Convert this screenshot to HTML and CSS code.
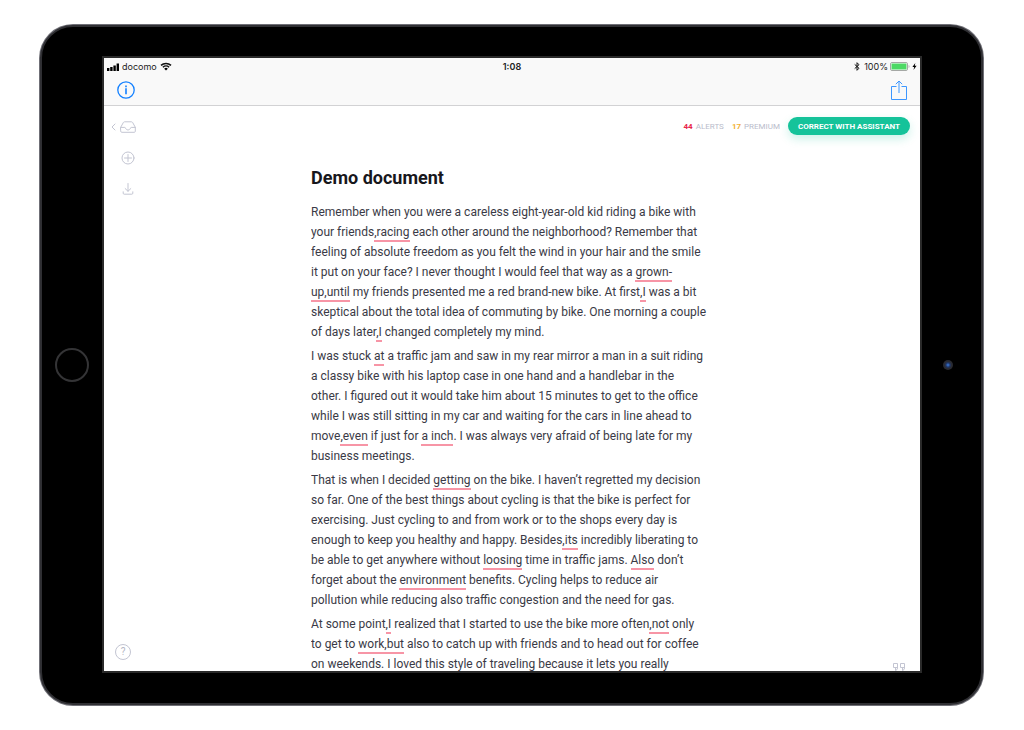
FILE: index.html
```
<!DOCTYPE html>
<html lang="en">
<head>
<meta charset="utf-8">
<meta name="viewport" content="width=device-width, initial-scale=1">
<title>Demo document</title>
<link rel="stylesheet" href="styles.css">
</head>
<body>
<div class="device">
  <div class="bezel">
    <div class="bezel-side"><span class="home-button"></span></div>
    <div class="screen">
      <header class="topbar">
        <div class="status">
          <div class="status-group">
            <svg class="signal" viewBox="0 0 12 8" aria-hidden="true"><path d="M0 5h2.400v3H0zM3.200 4h2.400v4H3.200zM6.400 2.500h2.400V8H6.400zM9.600 0.500H12V8H9.600z"/></svg>
            <span>docomo</span>
            <svg class="wifi" viewBox="0 0 12 9" aria-hidden="true"><path d="M1 3.400a7.200 7.200 0 0 1 10 0M2.900 5.300a4.500 4.500 0 0 1 6.200 0" fill="none" stroke="#111" stroke-width="1.500"/><path d="M6 8.600 4.200 6.700a2.600 2.600 0 0 1 3.600 0z"/></svg>
          </div>
          <time class="clock">1:08</time>
          <div class="status-group status-end">
            <svg class="bluetooth" viewBox="0 0 6 9" aria-hidden="true"><path d="M.7 2.400 5 6.300 3 8.300V.7l2 2L.7 6.600" fill="none" stroke="#111"/></svg>
            <span>100%</span>
            <svg class="battery" viewBox="0 0 20 9" aria-hidden="true"><rect x=".5" y=".5" width="17" height="8" rx="1.500" fill="#fff" stroke="#a5a8a5"/><rect x="1.500" y="1.500" width="15" height="6" rx=".5" fill="#4cd964"/><path d="M18.600 3v3c1.200-.4 1.200-2.600 0-3z" fill="#a5a8a5"/></svg>
            <svg class="bolt" viewBox="0 0 5 7" aria-hidden="true"><path d="M3.300 0 .4 4h1.800l-.7 3 3.100-4.200H2.800z"/></svg>
          </div>
        </div>
        <div class="toolbar">
          <button class="icon-button" type="button" aria-label="Information">
            <svg class="info" viewBox="0 0 18 18" aria-hidden="true"><circle cx="9" cy="9" r="8.200" fill="none" stroke="#1380ff" stroke-width="1.300"/><path d="M8.200 4.600h1.600v1.600H8.200zM8.200 7.300h1.600v5.900H8.200z" fill="#1380ff"/></svg>
          </button>
          <button class="icon-button" type="button" aria-label="Share">
            <svg class="share" viewBox="0 0 16 21" aria-hidden="true"><path d="M5.500 6.500h-5v13h15v-13h-5M8 13V1.500M4.800 4.200 8 1l3.200 3.200" fill="none" stroke="#3d97ff"/></svg>
          </button>
        </div>
      </header>
      <main class="editor">
        <nav class="rail" aria-label="Document tools">
          <button class="icon-button back" type="button" aria-label="Back to documents">
            <svg class="chevron" viewBox="0 0 5 8" aria-hidden="true"><path d="M4 1 1 4l3 3" class="line"/></svg>
            <svg class="tray" viewBox="0 0 16 12" aria-hidden="true"><path d="M.7 6.300 3.300 1.600Q3.700.8 4.600.8h6.800q.9 0 1.300.8l2.600 4.700v4q0 1-1 1H1.700q-1 0-1-1zM.7 6.400h4q.5 0 .7.5c.9 2.700 4.300 2.700 5.200 0q.2-.5.7-.5h4" class="line"/></svg>
          </button>
          <button class="icon-button" type="button" aria-label="New document">
            <svg class="tool" viewBox="0 0 14 14" aria-hidden="true"><circle cx="7" cy="7" r="6" class="line"/><path d="M7 3.500v7M3.500 7h7" class="line"/></svg>
          </button>
          <button class="icon-button" type="button" aria-label="Download">
            <svg class="tool" viewBox="0 0 14 14" aria-hidden="true"><path d="M7 1.500v7.700M4.200 6.600 7 9.300l2.800-2.700M2.200 9.800v1.400q0 1 1 1h7.600q1 0 1-1V9.800" class="line"/></svg>
          </button>
          <button class="help" type="button" aria-label="Help">?</button>
        </nav>
        <div class="actions">
          <span class="count"><b class="alerts">44</b> ALERTS</span>
          <span class="count"><b class="premium">17</b> PREMIUM</span>
          <button class="assistant" type="button">CORRECT WITH ASSISTANT</button>
        </div>
        <article class="document">
          <h1>Demo document</h1>
          <p>Remember when you were a careless eight-year-old kid riding a bike with<br>
          your friends<mark>,racing</mark> each other around the neighborhood? Remember that<br>
          feeling of absolute freedom as you felt the wind in your hair and the smile<br>
          it put on your face? I never thought I would feel that way as a <mark>grown-<br>
          up,until</mark> my friends presented me a red brand-new bike. At first<mark>,I</mark> was a bit<br>
          skeptical about the total idea of commuting by bike. One morning a couple<br>
          of days later<mark>,I</mark> changed completely my mind.</p>
          <p>I was stuck <mark>at</mark> a traffic jam and saw in my rear mirror a man in a suit riding<br>
          a classy bike with his laptop case in one hand and a handlebar in the<br>
          other. I figured out it would take him about 15 minutes to get to the office<br>
          while I was still sitting in my car and waiting for the cars in line ahead to<br>
          move<mark>,even</mark> if just for <mark>a inch</mark>. I was always very afraid of being late for my<br>
          business meetings.</p>
          <p>That is when I decided <mark>getting</mark> on the bike. I haven’t regretted my decision<br>
          so far. One of the best things about cycling is that the bike is perfect for<br>
          exercising. Just cycling to and from work or to the shops every day is<br>
          enough to keep you healthy and happy. Besides<mark>,its</mark> incredibly liberating to<br>
          be able to get anywhere without <mark>loosing</mark> time in traffic jams. <mark>Also</mark> don’t<br>
          forget about the <mark>environment</mark> benefits. Cycling helps to reduce air<br>
          pollution while reducing also traffic congestion and the need for gas.</p>
          <p>At some point<mark>,I</mark> realized that I started to use the bike more often<mark>,not</mark> only<br>
          to get to <mark>work,but</mark> also to catch up with friends and to head out for coffee<br>
          on weekends. I loved this style of traveling because it lets you really</p>
        </article>
        <svg class="quotes" viewBox="0 0 12 8" aria-hidden="true"><path d="M4.500 4.500h-4v-4h4v4.500q0 2-2 2.500V4.500M11.500 4.500h-4v-4h4v4.500q0 2-2 2.500V4.500" class="line"/></svg>
      </main>
    </div>
    <div class="bezel-side"><span class="camera"></span></div>
  </div>
</div>
</body>
</html>
```
FILE: styles.css
```
* { box-sizing: border-box; }

body {
  margin: 0;
  padding: 24px 40px 24px 39px;
  background: #fff;
  font-family: Roboto, "Liberation Sans", sans-serif;
  color: #3a3a46;
}

svg { display: block; flex: none; }

button {
  margin: 0;
  border: 0;
  font-family: inherit;
  cursor: pointer;
}

.device {
  height: calc(100vh - 48px);
  padding: 1px;
  border-radius: 34px;
  background: #6f6f76;
}

.bezel {
  display: grid;
  grid-template-columns: 60px minmax(0, 1fr) 59px;
  height: 100%;
  padding: 29px 0 30px;
  border: 2px solid #2f2f33;
  border-radius: 33px;
  background: #000;
}

.bezel-side {
  display: flex;
  align-items: center;
  justify-content: center;
}

.home-button {
  width: 34px;
  height: 34px;
  border: 2px solid #343436;
  border-radius: 50%;
}

.camera {
  width: 10px;
  height: 10px;
  margin-right: 8px;
  border-radius: 50%;
  background: radial-gradient(circle, #3f7fe0 0, #1f3566 30%, #292b33 50%, #24252a);
}

.screen {
  display: flex;
  flex-direction: column;
  min-height: 0;
  overflow: hidden;
  border: 2px solid #2a2a2a;
  background: #fff;
}

.topbar {
  flex: none;
  border-bottom: 1px solid #d2d2d4;
  background: #f9f9f9;
}

.status {
  display: grid;
  grid-template-columns: 1fr auto 1fr;
  align-items: center;
  height: 17px;
  padding: 0 3px;
  font-size: 9px;
  font-family: Inter, sans-serif;
  color: #222;
}

.status-group {
  display: flex;
  align-items: center;
  gap: 3px;
}

.status-end {
  justify-content: flex-end;
  gap: 2px;
}

.clock { font-weight: 600; }
.signal { width: 12px; height: 8px; }
.wifi { width: 12px; height: 9px; }
.bluetooth { width: 6px; height: 9px; margin-right: 2px; }
.battery { width: 20px; height: 9px; }
.bolt { width: 5px; height: 7px; }

.toolbar {
  display: flex;
  align-items: center;
  justify-content: space-between;
  height: 30px;
  padding: 0 13px;
}

.icon-button {
  display: flex;
  align-items: center;
  padding: 0;
  background: none;
}

.info { width: 18px; height: 18px; }
.share { width: 16px; height: 21px; }

.editor {
  flex: 1;
  display: grid;
  grid-template-columns: minmax(0, 1fr) 402px minmax(0, 1fr);
  grid-template-rows: auto minmax(0, 1fr);
  min-height: 0;
}

.line {
  fill: none;
  stroke: #c3c5d2;
  stroke-linecap: round;
  stroke-linejoin: round;
}

.rail {
  grid-row: 1 / 3;
  display: flex;
  flex-direction: column;
  align-items: flex-start;
  gap: 17px;
  padding: 14px 0 11px 17px;
}

.back {
  gap: 4px;
  height: 14px;
  margin-left: -10px;
}

.chevron { width: 5px; height: 8px; }
.tray { width: 16px; height: 12px; }
.tool { width: 14px; height: 14px; }

.help {
  width: 16px;
  height: 16px;
  margin: auto 0 0 -6px;
  padding: 0;
  border: 1px solid #c3c5d2;
  border-radius: 50%;
  background: none;
  font-size: 10px;
  line-height: 14px;
  color: #b4b6c4;
}

.actions {
  grid-column: 2 / 4;
  display: flex;
  align-items: center;
  justify-content: flex-end;
  gap: 8px;
  padding: 11px 10px 0 0;
  font-size: 8px;
}

.count {
  display: flex;
  gap: 3px;
  color: #b9bccb;
}

.alerts { color: #e8274b; }
.premium { color: #f2b134; }

.assistant {
  height: 18px;
  padding: 0 10px;
  border-radius: 9px;
  background: #15c39a;
  box-shadow: 0 4px 10px rgba(21, 195, 154, 0.22);
  font-size: 8px;
  font-weight: 700;
  color: #fff;
}

.document {
  grid-column: 2;
  display: flex;
  flex-direction: column;
  gap: 4px;
  min-height: 0;
  padding-top: 31px;
  overflow: hidden;
  font-size: 12px;
  line-height: 20px;
  white-space: nowrap;
}

.document h1 {
  margin: 0 0 8px;
  font-size: 18px;
  line-height: 24px;
  color: #17171c;
}

.document p {
  flex: none;
  margin: 0;
}

mark {
  padding-bottom: 1px;
  border-bottom: 2px solid #f795a6;
  background: none;
  color: inherit;
}

.quotes {
  grid-column: 3;
  align-self: end;
  justify-self: end;
  width: 12px;
  height: 8px;
  margin-right: 15px;
}
```
